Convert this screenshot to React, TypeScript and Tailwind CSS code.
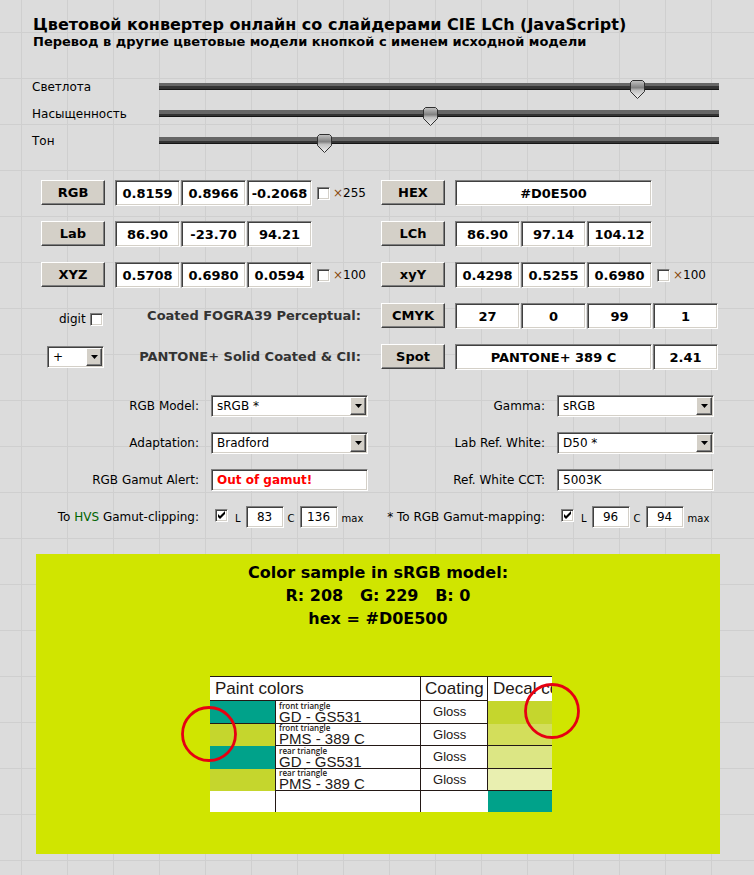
import { useState } from "react";
import type { ReactNode } from "react";

const sunken =
  "border border-t-[#808080] border-l-[#808080] border-r-white border-b-white bg-white shadow-[inset_1px_1px_#404040,inset_-1px_-1px_#d4d0c8] outline-none";
const raised =
  "border border-t-white border-l-white border-r-[#404040] border-b-[#404040] bg-[#d4d0c8] shadow-[inset_-1px_-1px_#808080]";

function Slider({ id, label, initial }: { id: string; label: string; initial: number }) {
  const [value, setValue] = useState(initial);
  return (
    <div className="flex h-[27px] items-center">
      <label htmlFor={id} className="w-[127px] shrink-0">
        {label}
      </label>
      <div className="relative h-[7px] min-w-0 flex-1">
        <input
          id={id}
          type="range"
          min={0}
          max={545}
          value={value}
          onChange={(e) => setValue(Number(e.target.value))}
          className="block h-[7px] w-full appearance-none bg-linear-to-b from-[#666] from-50% to-[#333] to-50% shadow-[inset_0_-1px_#151515] outline-none [&::-webkit-slider-thumb]:h-5 [&::-webkit-slider-thumb]:w-[15px] [&::-webkit-slider-thumb]:appearance-none [&::-webkit-slider-thumb]:bg-transparent"
        />
        <div className="pointer-events-none absolute -top-[3px] right-[15px] left-0">
          <svg
            width="15"
            height="20"
            viewBox="0 0 15 20"
            className="absolute top-0"
            style={{ left: `${(value / 545) * 100}%` }}
          >
            <defs>
              <linearGradient id={`${id}-fill`} x1="0" y1="0" x2="0" y2="1">
                <stop offset="0" stopColor="#c4c4c4" />
                <stop offset="0.4" stopColor="#808080" />
                <stop offset="0.55" stopColor="#c0c0c0" />
                <stop offset="1" stopColor="#f4f4f4" />
              </linearGradient>
            </defs>
            <path
              d="M2.5 .5H12.5L14.5 2.5V11.5L7.5 18.5L.5 11.5V2.5Z"
              fill={`url(#${id}-fill)`}
              stroke="#303030"
            />
          </svg>
        </div>
      </div>
    </div>
  );
}

function ModelButton({ children }: { children: ReactNode }) {
  return (
    <button type="button" className={`mr-[10px] h-[25px] w-16 shrink-0 self-start text-[13px] font-bold ${raised}`}>
      {children}
    </button>
  );
}

function Value({ label, value, wide = false }: { label: string; value: string; wide?: boolean }) {
  return (
    <input
      aria-label={label}
      defaultValue={value}
      className={`h-[26px] shrink-0 text-center text-[13px] font-bold ${wide ? "w-[197px]" : "w-[65px]"} ${sunken}`}
    />
  );
}

function Tick({ id, label, checked = false }: { id: string; label?: string; checked?: boolean }) {
  return (
    <span className="relative block size-[13px] shrink-0">
      <input
        id={id}
        aria-label={label}
        type="checkbox"
        defaultChecked={checked}
        className={`peer block size-[13px] appearance-none ${sunken}`}
      />
      <svg
        viewBox="0 0 13 13"
        className="pointer-events-none absolute inset-0 hidden size-[13px] peer-checked:block"
      >
        <path d="M3 5v3l2 2l5-5v-3l-5 5z" fill="#000" />
      </svg>
    </span>
  );
}

function Scale({ id, factor }: { id: string; factor: string }) {
  return (
    <span className="ml-[5px] flex items-center">
      <Tick id={id} />
      <label htmlFor={id} className="ml-[3px]">
        <span className="text-[#8a4a10]">×</span>
        {factor}
      </label>
    </span>
  );
}

function Triple({ name, values, children }: { name: string; values: string[]; children?: ReactNode }) {
  return (
    <div className="flex h-[26px] items-center">
      <ModelButton>{name}</ModelButton>
      <div className="flex gap-px">
        {values.map((v, i) => (
          <Value key={i} label={`${name} ${i + 1}`} value={v} />
        ))}
      </div>
      {children}
    </div>
  );
}

function Select({ id, label, options, small = false }: { id?: string; label?: string; options: string[]; small?: boolean }) {
  return (
    <div className={`relative ${small ? "w-[57px]" : "w-full"}`}>
      <select id={id} aria-label={label} className={`block h-[22px] w-full appearance-none pr-5 pl-[5px] ${sunken}`}>
        {options.map((o) => (
          <option key={o}>{o}</option>
        ))}
      </select>
      <span
        className={`pointer-events-none absolute top-[2px] right-[2px] flex h-[18px] w-4 items-center justify-center ${raised}`}
      >
        <svg width="7" height="4" viewBox="0 0 7 4">
          <path d="M0 0h7L3.5 4z" fill="#000" />
        </svg>
      </span>
    </div>
  );
}

function Field({ id, label, children }: { id: string; label: ReactNode; children: ReactNode }) {
  return (
    <div className="flex h-[22px] items-center">
      <label htmlFor={id} className="flex-1 pr-3 text-right whitespace-nowrap">
        {label}
      </label>
      <div className="w-[157px] shrink-0">{children}</div>
    </div>
  );
}

function Limits({ id, l, c }: { id: string; l: string; c: string }) {
  return (
    <div className="flex items-center pl-1 text-[10px]">
      <div className="self-start pt-[3px]">
        <Tick id={id} checked />
      </div>
      <label className="ml-[7px] flex items-center gap-[5px]">
        <span className="pt-1">L</span>
        <input defaultValue={l} className={`h-[22px] w-[38px] text-center text-xs ${sunken}`} />
      </label>
      <label className="ml-1 flex items-center gap-[5px]">
        <span className="pt-1">C</span>
        <input defaultValue={c} className={`h-[22px] w-[38px] text-center text-xs ${sunken}`} />
      </label>
      <span className="ml-1 pt-1">max</span>
    </div>
  );
}

const line = "border-[#231815]";

function PaintRow({
  place,
  paint,
  swatch,
  decal,
}: {
  place: string;
  paint: string;
  swatch: string;
  decal: string;
}) {
  return (
    <tr className="odd:h-[23px] even:h-[22px]">
      <td className={`border-r ${line} ${swatch}`} />
      <td className={`border-r border-b pl-[3px] ${line}`}>
        <div className="font-['Open_Sans',sans-serif] text-[8px] leading-[8px] font-semibold">{place}</div>
        <div className="text-[15px] leading-[13px]">{paint}</div>
      </td>
      <td className={`border-r border-b pl-3 text-[13px] ${line}`}>Gloss</td>
      <td className={decal} />
    </tr>
  );
}

function PaintTable() {
  return (
    <div className="relative w-[342px]">
      <div className="overflow-hidden">
        <table className="w-full table-fixed border-separate border-spacing-0 bg-white font-['Liberation_Sans',Arial,sans-serif] text-[#231815]">
          <colgroup>
            <col className="w-[66px]" />
            <col className="w-[145px]" />
            <col className="w-[67px]" />
            <col className="w-16" />
          </colgroup>
          <thead>
            <tr className="h-[25px] text-left text-[17px] leading-5">
              <th colSpan={2} className={`border-y border-r pl-[5px] font-normal ${line}`}>
                Paint colors
              </th>
              <th className={`border-y border-r pl-1 font-normal ${line}`}>Coating</th>
              <th className={`overflow-hidden border-t pl-[5px] font-normal whitespace-nowrap ${line}`}>Decal co</th>
            </tr>
          </thead>
          <tbody>
            <PaintRow place="front triangle" paint="GD - GS531" swatch="border-b bg-[#00a28a]" decal="bg-[#c5d62d]" />
            <PaintRow
              place="front triangle"
              paint="PMS - 389 C"
              swatch="bg-[#c5d62d]"
              decal="border-b border-[#231815] bg-[#d3de5b]"
            />
            <PaintRow
              place="rear triangle"
              paint="GD - GS531"
              swatch="bg-[#00a28a]"
              decal="border-b border-[#231815] bg-[#dce684]"
            />
            <PaintRow
              place="rear triangle"
              paint="PMS - 389 C"
              swatch="bg-[#c5d62d]"
              decal="border-b border-[#231815] bg-[#e9efb0]"
            />
            <tr className="h-[21px]">
              <td className={`border-r ${line}`} />
              <td className={`border-r ${line}`} />
              <td />
              <td className="bg-[#00a28a]" />
            </tr>
          </tbody>
        </table>
      </div>
      <svg className="absolute top-[30px] -left-[29px]" width="56" height="56" viewBox="0 0 56 56">
        <circle cx="28" cy="28" r="26.5" fill="none" stroke="#e60012" strokeWidth="2.8" />
      </svg>
      <svg className="absolute top-[7px] -right-7" width="56" height="56" viewBox="0 0 56 56">
        <circle cx="28" cy="28" r="26.5" fill="none" stroke="#e60012" strokeWidth="2.8" />
      </svg>
    </div>
  );
}

export default function App() {
  return (
    <main className="min-h-screen bg-[#dcdcdc] bg-[linear-gradient(to_right,#cfcfcf_1px,transparent_1px),linear-gradient(to_bottom,#cfcfcf_1px,transparent_1px)] bg-size-[46px_46px] bg-position-[21px_32px] pt-4 pb-[21px] font-['DejaVu_Sans',Verdana,sans-serif] text-xs leading-4 text-black">
      <header className="pl-[33px] font-bold">
        <h1 className="text-base leading-[18px]">Цветовой конвертер онлайн со слайдерами CIE LCh (JavaScript)</h1>
        <p className="text-[13px] leading-4">Перевод в другие цветовые модели кнопкой с именем исходной модели</p>
      </header>

      <section className="mt-[23px] pr-[35px] pl-8">
        <Slider id="lightness" label="Светлота" initial={471} />
        <Slider id="chroma" label="Насыщенность" initial={264} />
        <Slider id="hue" label="Тон" initial={158} />
      </section>

      <section className="mt-[26px] grid grid-cols-2 gap-y-[15px] pr-[33px] pl-[41px]">
        <Triple name="RGB" values={["0.8159", "0.8966", "-0.2068"]}>
          <Scale id="rgb-scale" factor="255" />
        </Triple>
        <div className="flex items-center">
          <ModelButton>HEX</ModelButton>
          <Value label="HEX" value="#D0E500" wide />
        </div>
        <Triple name="Lab" values={["86.90", "-23.70", "94.21"]} />
        <Triple name="LCh" values={["86.90", "97.14", "104.12"]} />
        <Triple name="XYZ" values={["0.5708", "0.6980", "0.0594"]}>
          <Scale id="xyz-scale" factor="100" />
        </Triple>
        <Triple name="xyY" values={["0.4298", "0.5255", "0.6980"]}>
          <Scale id="xyy-scale" factor="100" />
        </Triple>
        <div className="flex items-center justify-between pr-5 pl-[18px]">
          <div className="flex items-center gap-1 pt-[6px]">
            <label htmlFor="digit">digit</label>
            <Tick id="digit" />
          </div>
          <span className="text-[13px] font-bold text-[#333]">Coated FOGRA39 Perceptual:</span>
        </div>
        <Triple name="CMYK" values={["27", "0", "99", "1"]} />
        <div className="flex items-center justify-between pr-5 pl-[6px]">
          <Select label="Spot step" options={["+", "-"]} small />
          <span className="text-[13px] font-bold text-[#333]">PANTONE+ Solid Coated &amp; CII:</span>
        </div>
        <div className="flex items-center">
          <ModelButton>Spot</ModelButton>
          <div className="flex gap-px">
            <Value label="Spot colour" value="PANTONE+ 389 C" wide />
            <Value label="Difference" value="2.41" />
          </div>
        </div>
      </section>

      <section className="mt-[25px] grid grid-cols-2 gap-y-[15px] pr-10 pl-[22px]">
        <Field id="model" label="RGB Model:">
          <Select id="model" options={["sRGB *", "Adobe RGB"]} />
        </Field>
        <Field id="gamma" label="Gamma:">
          <Select id="gamma" options={["sRGB", "2.2"]} />
        </Field>
        <Field id="adaptation" label="Adaptation:">
          <Select id="adaptation" options={["Bradford", "Von Kries"]} />
        </Field>
        <Field id="white" label="Lab Ref. White:">
          <Select id="white" options={["D50 *", "D65"]} />
        </Field>
        <Field id="alert" label="RGB Gamut Alert:">
          <input
            id="alert"
            readOnly
            value="Out of gamut!"
            className={`block h-[22px] w-full pl-[5px] font-bold text-[#f00] ${sunken}`}
          />
        </Field>
        <Field id="cct" label="Ref. White CCT:">
          <input id="cct" defaultValue="5003K" className={`block h-[22px] w-full pl-[5px] ${sunken}`} />
        </Field>
        <Field
          id="clip"
          label={
            <>
              To <span className="text-[#006400]">HVS</span> Gamut-clipping:
            </>
          }
        >
          <Limits id="clip" l="83" c="136" />
        </Field>
        <Field id="map" label="* To RGB Gamut-mapping:">
          <Limits id="map" l="96" c="94" />
        </Field>
      </section>

      <section className="mt-[26px] mr-[34px] ml-9 bg-[#d0e500] pt-[7px] pb-[42px]">
        <div className="text-center text-base leading-[23px] font-bold whitespace-pre-wrap">
          <p>Color sample in sRGB model:</p>
          <p>{"R: 208   G: 229   B: 0"}</p>
          <p>hex = #D0E500</p>
        </div>
        <div className="mt-[46px] flex justify-center pl-[6px]">
          <PaintTable />
        </div>
      </section>
    </main>
  );
}
